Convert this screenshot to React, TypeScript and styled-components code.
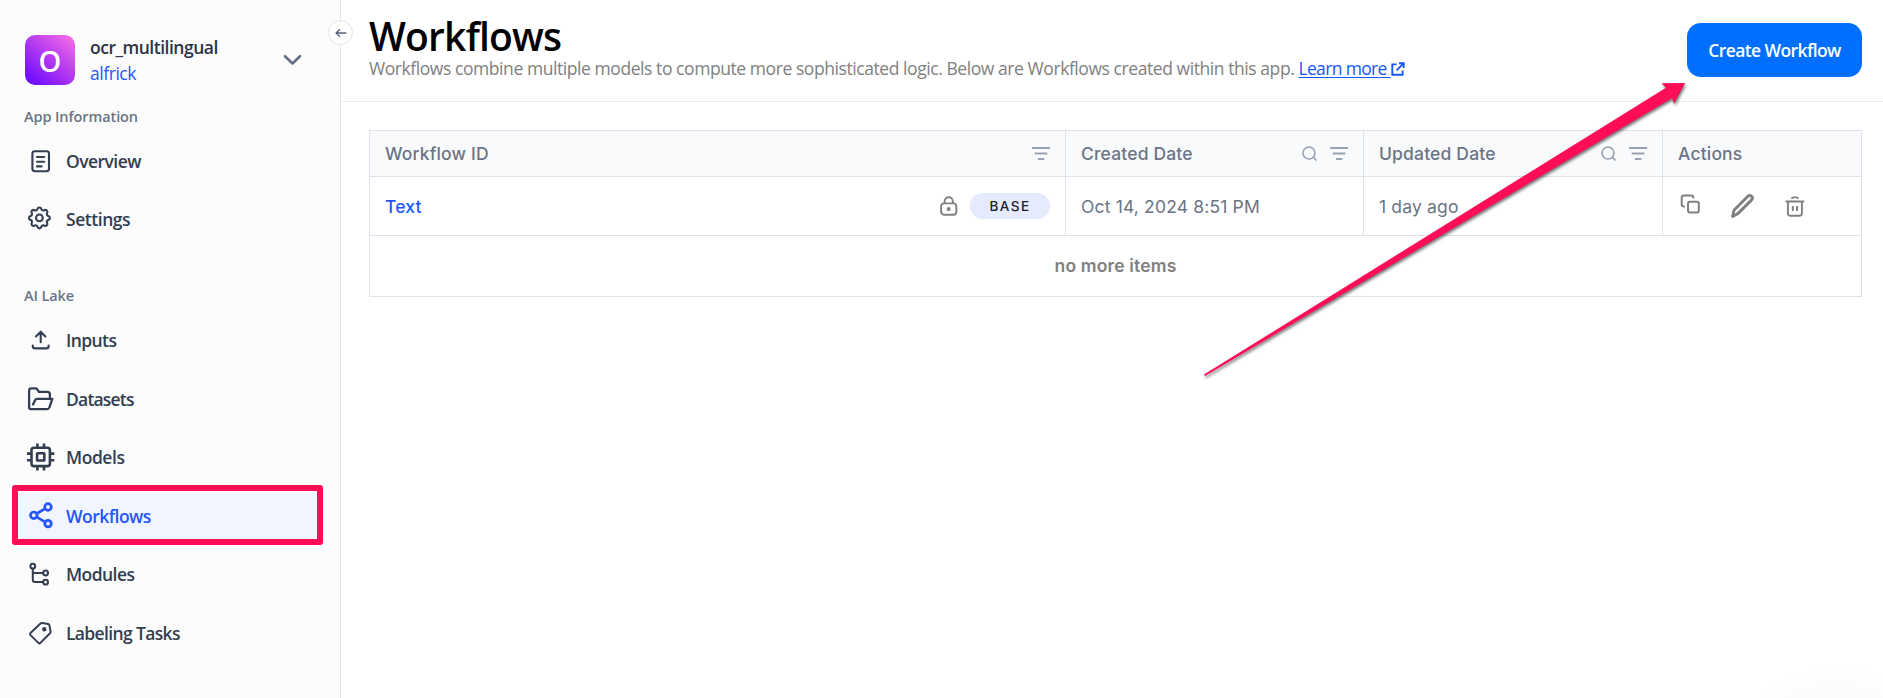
import React from 'react';
import styled, { createGlobalStyle } from 'styled-components';

const GlobalStyle = createGlobalStyle`
  *, *::before, *::after { box-sizing: border-box; }
  html, body { margin: 0; height: 100%; overflow: hidden; background: #fff; }
  body { font-family: "Open Sans", "Noto Sans", sans-serif; }
  svg { display: block; flex: none; }
`;

const Page = styled.div`
  position: relative;
  display: flex;
  width: 100%;
  height: 698px;
  overflow: hidden;
`;

/* ---------- sidebar ---------- */

const Sidebar = styled.aside`
  position: relative;
  flex: none;
  width: 341px;
  height: 100%;
  background: #fcfcfd;
  border-right: 1px solid #e2e5ea;
`;

const CollapseButton = styled.button`
  position: absolute;
  top: 20px;
  right: -13px;
  display: grid;
  place-items: center;
  width: 25px;
  height: 25px;
  padding: 0;
  border: 1px solid #e2e5ec;
  border-radius: 50%;
  background: #fff;
  z-index: 2;
`;

const AppSwitcher = styled.div`
  display: flex;
  align-items: center;
  height: 50px;
  margin: 35px 38.5px 0 25px;
`;

const Avatar = styled.div`
  width: 50px;
  height: 50px;
  border-radius: 10px;
  background: linear-gradient(40deg, #6a08ff 5%, #b23af0 52%, #fb70e6 100%);
  color: #fff;
  font-size: 29px;
  font-weight: 600;
  line-height: 52px;
  text-align: center;
`;

const AppNames = styled.div`
  flex: 1;
  margin-left: 15px;
  white-space: nowrap;
`;

const AppName = styled.div`
  color: #2b3447;
  font-size: 17.5px;
  font-weight: 540;
  line-height: 26px;
  letter-spacing: -0.48px;
`;

const AppOwner = styled.div`
  color: #2456fa;
  font-size: 17.5px;
  line-height: 26px;
  letter-spacing: -0.45px;
`;

const SectionLabel = styled.h2<{ $top: number }>`
  margin: ${(p) => p.$top}px 0 0 24px;
  color: #6b7485;
  font-size: 14.5px;
  font-weight: 540;
  line-height: 20px;
  letter-spacing: -0.1px;
`;

const NavList = styled.nav<{ $top: number }>`
  display: flex;
  flex-direction: column;
  gap: 10.5px;
  margin: ${(p) => p.$top}px 23px 0 18px;
`;

const NavItem = styled.a<{ $active?: boolean; $spacing?: number }>`
  position: relative;
  display: flex;
  align-items: center;
  gap: 10px;
  height: 48px;
  padding-left: 6px;
  border-radius: 5px;
  background: ${(p) => (p.$active ? '#f1f5ff' : 'transparent')};
  color: ${(p) => (p.$active ? '#2456fa' : '#333e50')};
  font-size: 17.5px;
  font-weight: 540;
  letter-spacing: ${(p) => p.$spacing ?? -0.45}px;
  white-space: nowrap;
`;

const Highlight = styled.span`
  position: absolute;
  inset: -6.5px -6px -5.5px -6px;
  border: 6px solid #ff0d57;
  border-radius: 3px;
`;

/* ---------- main area ---------- */

const Main = styled.main`
  flex: 1;
  min-width: 0;
  background: radial-gradient(circle 106px at 1496px 771px, #fbfbfb 60%, #fdfdfd 85%, #fff 100%);
`;

const PageHeader = styled.header`
  display: flex;
  justify-content: space-between;
  height: 102px;
  padding: 15px 21px 0 28px;
  border-bottom: 1px solid #e9ebf0;
`;

const Title = styled.h1`
  margin: 0;
  color: #000;
  font-size: 39px;
  font-weight: 600;
  line-height: 42px;
  letter-spacing: -0.8px;
`;

const Subtitle = styled.p`
  margin: 0;
  color: #808080;
  font-size: 17.5px;
  line-height: 22px;
  letter-spacing: -0.43px;
  white-space: nowrap;
`;

const LearnMore = styled.a`
  color: #1557ff;
  letter-spacing: -0.65px;
  text-decoration: underline;
  text-underline-offset: 2px;

  svg { display: inline-block; vertical-align: -1px; }
`;

const CreateButton = styled.button`
  width: 175px;
  height: 54px;
  margin-top: 8px;
  padding: 0;
  border: 0;
  border-radius: 14px;
  background: #006fff;
  color: #fff;
  font: 600 17.5px "Open Sans", sans-serif;
  letter-spacing: -0.6px;
`;

const Table = styled.div`
  margin: 28px 21px 0 28px;
  border: 1px solid #dfe2ea;
  font-family: Inter, sans-serif;
  font-size: 17.5px;
  letter-spacing: 0.16px;
  color: #6b7485;
`;

const Row = styled.div<{ $head?: boolean }>`
  display: grid;
  grid-template-columns: 696px 298px 299px 1fr;
  height: ${(p) => (p.$head ? 46 : 59)}px;
  background: ${(p) => (p.$head ? '#f9fafc' : 'transparent')};
  font-weight: ${(p) => (p.$head ? 500 : 400)};
  border-bottom: 1px solid #dfe2ea;
`;

const Cell = styled.div`
  display: flex;
  align-items: center;
  padding: 0 15px;
  border-right: 1px solid #dfe2ea;
  white-space: nowrap;

  &:last-child { border-right: 0; }
`;

const CellTools = styled.div<{ $gap: number; $lift?: number }>`
  display: flex;
  align-items: center;
  gap: ${(p) => p.$gap}px;
  margin-left: auto;
  padding-bottom: ${(p) => p.$lift ?? 0}px;
`;

const WorkflowLink = styled.a`
  color: #1f58ff;
  font-weight: 450;
`;

const Badge = styled.span`
  display: grid;
  place-items: center;
  width: 80px;
  height: 26px;
  border-radius: 13px;
  background: #e5ebfd;
  color: #1b2130;
  font-size: 13.5px;
  font-weight: 450;
  letter-spacing: 1.5px;
`;

const EmptyRow = styled.div`
  display: grid;
  place-items: center;
  height: 60px;
  padding-bottom: 2px;
  color: #808080;
  font-weight: 600;
`;

const ArrowOverlay = styled.svg`
  position: absolute;
  top: 0;
  left: 0;
  z-index: 5;
  pointer-events: none;
  filter: drop-shadow(1px 2px 1.5px rgba(0, 0, 0, 0.55));
`;

/* ---------- icons ---------- */

const NavIcon = ({ children, weight = 2.2 }: { children: React.ReactNode; weight?: number }) => (
  <svg
    width="32"
    height="32"
    viewBox="0 0 32 32"
    fill="none"
    stroke="currentColor"
    strokeWidth={weight}
    strokeLinecap="round"
    strokeLinejoin="round"
  >
    {children}
  </svg>
);

const OverviewIcon = () => (
  <NavIcon weight={2.1}>
    <rect x="8.4" y="6.2" width="16.6" height="20" rx="2.4" />
    <path d="M13 12h7.2M13 16.8h7.2M13 21.4h4.6" />
  </NavIcon>
);

const SettingsIcon = () => (
  <NavIcon weight={2}>
    <g transform="translate(1.5 1) scale(1.16)" strokeWidth="1.8">
      <path d="M10.325 4.317c.426 -1.756 2.924 -1.756 3.35 0a1.724 1.724 0 0 0 2.573 1.066c1.543 -.94 3.31 .826 2.37 2.37a1.724 1.724 0 0 0 1.065 2.572c1.756 .426 1.756 2.924 0 3.35a1.724 1.724 0 0 0 -1.066 2.573c.94 1.543 -.826 3.31 -2.37 2.37a1.724 1.724 0 0 0 -2.572 1.065c-.426 1.756 -2.924 1.756 -3.35 0a1.724 1.724 0 0 0 -2.573 -1.066c-1.543 .94 -3.31 -.826 -2.37 -2.37a1.724 1.724 0 0 0 -1.065 -2.572c-1.756 -.426 -1.756 -2.924 0 -3.35a1.724 1.724 0 0 0 1.066 -2.573c-.94 -1.543 .826 -3.31 2.37 -2.37c1 .608 2.296 .07 2.572 -1.065" />
      <circle cx="12" cy="12" r="2.9" />
    </g>
  </NavIcon>
);

const InputsIcon = () => (
  <NavIcon weight={2.1}>
    <path d="M16.7 18.3V8M12 12.4l4.7-4.7 4.7 4.7M8.8 21.6v.6q0 2.2 2.2 2.2h11.4q2.2 0 2.2-2.2v-.6" />
  </NavIcon>
);

const DatasetsIcon = () => (
  <NavIcon weight={2.3}>
    <path d="M9 21.4l2.2-4.5q.5-1 1.7-1h15.4l-2.9 8.6q-.6 1.7-2.4 1.7H7.4q-2.3 0-2.3-2.3V7.7q0-2.3 2.3-2.3h4q1.2 0 1.9 1l1.6 2.5h8.5q2.5 0 2.5 2.5v4.3" />
  </NavIcon>
);

const ModelsIcon = () => (
  <NavIcon weight={2.6}>
    <rect x="7.5" y="6.7" width="18.4" height="18.4" rx="2.4" />
    <rect x="13.1" y="12.3" width="7.2" height="7.2" rx="0.3" />
    <path
      strokeLinecap="butt"
      d="M13.4 2.4v4M20 2.4v4M13.4 25.4v4M20 25.4v4M3 12.6h4M3 19.2h4M26.3 12.6h4M26.3 19.2h4"
    />
  </NavIcon>
);

const WorkflowsIcon = () => (
  <NavIcon weight={2.7}>
    <circle cx="24" cy="7" r="3.3" />
    <circle cx="9.8" cy="15.3" r="3.3" />
    <circle cx="24" cy="23.6" r="3.3" />
    <path d="M12.9 13.5l8-4.7M12.9 17.1l8 4.7" />
  </NavIcon>
);

const ModulesIcon = () => (
  <NavIcon weight={2}>
    <circle cx="8.8" cy="8.2" r="2.4" />
    <circle cx="21.6" cy="15" r="2.4" />
    <circle cx="21.6" cy="24.2" r="2.4" />
    <path d="M8.8 10.8v11.3q0 2 2 2h8.2M8.8 15h10" />
  </NavIcon>
);

const LabelingIcon = () => (
  <NavIcon weight={2}>
    <path d="M6.5 16l9.7-9.2q.9-.9 2-.8l6 .9q1 .2 1.2 1.2l1.2 6.4q.2 1-.6 1.7l-9.6 9.7q-1 .9-2 0l-7.900-7.800q-1-1.100 0-2.100z" />
    <circle cx="20.3" cy="12.2" r="1.2" fill="currentColor" />
  </NavIcon>
);

const FilterIcon = () => (
  <svg width="18" height="14" viewBox="0 0 18 14" fill="none" stroke="#98a2b3" strokeWidth="2">
    <path d="M0 2h18M2.7 7.5h12.6M6 13h6.300" />
  </svg>
);

const SearchIcon = () => (
  <svg width="15" height="15" viewBox="0 0 15 15" fill="none" stroke="#98a2b3" strokeWidth="1.6">
    <circle cx="7" cy="7" r="6" />
    <path d="M11.3 11.3l3.2 3.2" />
  </svg>
);

const LockIcon = () => (
  <svg width="18" height="20" viewBox="0 0 18 20" fill="none" stroke="#808080" strokeWidth="1.9">
    <rect x="1.1" y="7.4" width="15.2" height="11.4" rx="3" />
    <path d="M4.6 7.2V5.4a4.1 4.1 0 0 1 8.2 0v1.8" />
    <circle cx="8.7" cy="13" r="1.1" fill="#808080" />
  </svg>
);

const CopyIcon = () => (
  <svg width="20" height="20" viewBox="0 0 20 20" fill="none" stroke="#808080" strokeWidth="2">
    <rect x="8" y="7.7" width="10.8" height="10.8" rx="2" />
    <path d="M4.8 12.4H3.7q-2 0-2-2V3.5q0-2 2-2h7.6q2 0 2 2v.9" />
  </svg>
);

const PencilIcon = () => (
  <svg width="26" height="26" viewBox="0 0 26 26" fill="none" stroke="#808080" strokeWidth="2.9" strokeLinejoin="round">
    <path d="M2.6 23.4l1.2-5.3Q4.1 17 4.9 16.2L17.9 3.2q1.9-1.6 3.7 0 1.7 1.8 0 3.7L8.6 19.9q-.9.9-1.9 1.3z" />
  </svg>
);

const TrashIcon = () => (
  <svg width="20" height="21" viewBox="0 0 20 21" fill="none" stroke="#808080" strokeWidth="1.9">
    <path d="M0.5 5.5h18.8M2.9 5.5v11.7q0 2.5 2.5 2.5h9q2.5 0 2.5-2.5V5.5M6.8 2.8q.2-1.4 1.6-1.4h3q1.4 0 1.6 1.4M7.8 10v5M12 10v5" />
  </svg>
);

const ExternalIcon = () => (
  <svg width="14" height="14" viewBox="0 0 14 14" fill="none" stroke="#1557ff" strokeWidth="1.9">
    <path d="M5.6 2.4H1.3v10.3h10.3V8.5M8 1.2h4.7v4.7M12.5 1.4L5.6 8.3" />
  </svg>
);

const Actions = styled.div`
  display: flex;
  align-items: center;
  gap: 29px;
  margin-left: 2px;

  svg:first-child { margin: 0 1px 5px 0; }
`;

export default function App() {
  return (
    <>
      <GlobalStyle />
      <Page>
        <Sidebar>
          <CollapseButton aria-label="Collapse sidebar">
            <svg width="12" height="10" viewBox="0 0 12 10" fill="none" stroke="#566176" strokeWidth="1.3">
              <path d="M11.3 5H1M5 1.2L1.1 5 5 8.8" />
            </svg>
          </CollapseButton>
          <AppSwitcher>
            <Avatar>O</Avatar>
            <AppNames>
              <AppName>ocr_multilingual</AppName>
              <AppOwner>alfrick</AppOwner>
            </AppNames>
            <svg width="19" height="12" viewBox="0 0 19 12" fill="none" stroke="#667085" strokeWidth="2.6" strokeLinecap="round" strokeLinejoin="round">
              <path d="M2 2.2l7.5 7.3L17 2.2" />
            </svg>
          </AppSwitcher>

          <SectionLabel $top={22}>App Information</SectionLabel>
          <NavList $top={9.75}>
            <NavItem $spacing={-0.55}><OverviewIcon />Overview</NavItem>
            <NavItem><SettingsIcon />Settings</NavItem>
          </NavList>

          <SectionLabel $top={42.25}>AI Lake</SectionLabel>
          <NavList $top={10.5}>
            <NavItem $spacing={-0.6}><InputsIcon />Inputs</NavItem>
            <NavItem $spacing={-0.8}><DatasetsIcon />Datasets</NavItem>
            <NavItem><ModelsIcon />Models</NavItem>
            <NavItem $active $spacing={-0.52}>
              <WorkflowsIcon />Workflows
              <Highlight />
            </NavItem>
            <NavItem $spacing={-0.55}><ModulesIcon />Modules</NavItem>
            <NavItem $spacing={-0.65}><LabelingIcon />Labeling Tasks</NavItem>
          </NavList>
        </Sidebar>

        <Main>
          <PageHeader>
            <div>
              <Title>Workflows</Title>
              <Subtitle>
                Workflows combine multiple models to compute more sophisticated logic. Below are Workflows created
                within this app. <LearnMore>Learn more <ExternalIcon /></LearnMore>
              </Subtitle>
            </div>
            <CreateButton>Create Workflow</CreateButton>
          </PageHeader>

          <Table>
            <Row $head>
              <Cell>Workflow ID<CellTools $gap={13} $lift={1}><FilterIcon /></CellTools></Cell>
              <Cell>Created Date<CellTools $gap={13} $lift={1}><SearchIcon /><FilterIcon /></CellTools></Cell>
              <Cell>Updated Date<CellTools $gap={13} $lift={1}><SearchIcon /><FilterIcon /></CellTools></Cell>
              <Cell>Actions</Cell>
            </Row>
            <Row>
              <Cell>
                <WorkflowLink>Text</WorkflowLink>
                <CellTools $gap={12}><LockIcon /><Badge>BASE</Badge></CellTools>
              </Cell>
              <Cell>Oct 14, 2024 8:51 PM</Cell>
              <Cell>1 day ago</Cell>
              <Cell>
                <Actions><CopyIcon /><PencilIcon /><TrashIcon /></Actions>
              </Cell>
            </Row>
            <EmptyRow>no more items</EmptyRow>
          </Table>
        </Main>

        <ArrowOverlay width="1883" height="698" viewBox="0 0 1883 698">
          <path fill="#ff0d57" d="M1204 374.5L1666 87.8 1661.5 83.3 1685 83 1674 103.8 1672.2 98 1205 376z" />
        </ArrowOverlay>
      </Page>
    </>
  );
}
